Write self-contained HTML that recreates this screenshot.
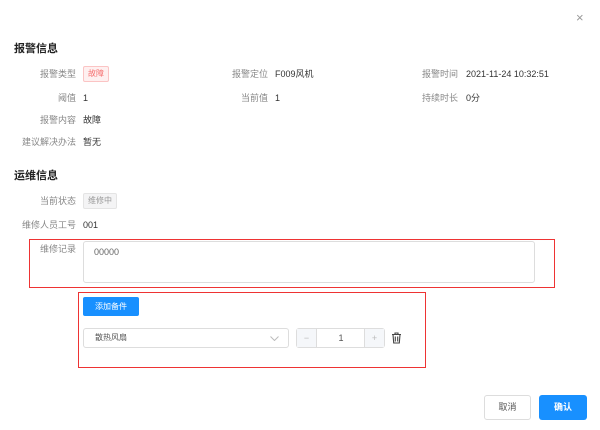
<!DOCTYPE html><html><head><meta charset="utf-8"><style>
body{margin:0;width:600px;height:430px;background:#fff;font-family:"Liberation Sans","Noto Sans CJK SC",sans-serif;font-size:9px;color:#333;position:relative;overflow:hidden}
.a{position:absolute;white-space:nowrap;line-height:12px}
.l{color:#888;text-align:right;width:70px}
h{position:absolute;font-weight:bold;font-size:11px;color:#222}
</style></head><body>
<div class="a" style="left:576px;top:12px;font-size:13px;color:#999">×</div>
<h style="left:14px;top:40px">报警信息</h>
<div class="a l" style="left:6px;top:68px">报警类型</div>
<div class="a" style="left:83px;top:66px;border:1px solid #fbc4c4;background:#fef0f0;color:#f56c6c;font-size:8px;padding:1px 4px;border-radius:2px">故障</div>
<div class="a l" style="left:198px;top:68px">报警定位</div><div class="a" style="left:275px;top:68px">F009风机</div>
<div class="a l" style="left:388px;top:68px">报警时间</div><div class="a" style="left:466px;top:68px">2021-11-24 10:32:51</div>
<div class="a l" style="left:6px;top:92px">阈值</div><div class="a" style="left:83px;top:92px">1</div>
<div class="a l" style="left:198px;top:92px">当前值</div><div class="a" style="left:275px;top:92px">1</div>
<div class="a l" style="left:388px;top:92px">持续时长</div><div class="a" style="left:466px;top:92px">0分</div>
<div class="a l" style="left:6px;top:114px">报警内容</div><div class="a" style="left:83px;top:114px">故障</div>
<div class="a l" style="left:6px;top:136px">建议解决办法</div><div class="a" style="left:83px;top:136px">暂无</div>
<h style="left:14px;top:167px">运维信息</h>
<div class="a l" style="left:6px;top:195px">当前状态</div>
<div class="a" style="left:83px;top:193px;border:1px solid #e4e4e4;background:#f4f4f5;color:#999;font-size:8px;padding:1px 4px;border-radius:2px">维修中</div>
<div class="a l" style="left:6px;top:219px">维修人员工号</div><div class="a" style="left:83px;top:219px">001</div>
<div class="a" style="left:29px;top:239px;width:524px;height:47px;border:1px solid #e33"></div>
<div class="a l" style="left:6px;top:243px">维修记录</div>
<div class="a" style="left:83px;top:241px;width:452px;height:42px;border:1px solid #ddd;border-radius:3px;color:#666;padding:4px 10px;box-sizing:border-box;font-size:9px">00000</div>
<div class="a" style="left:78px;top:292px;width:346px;height:74px;border:1px solid #e33"></div>
<div class="a" style="left:83px;top:297px;width:56px;height:19px;background:#1890ff;border-radius:2px;color:#fff;font-size:8px;line-height:19px;text-align:center">添加备件</div>
<div class="a" style="left:83px;top:328px;width:206px;height:20px;border:1px solid #ddd;border-radius:3px;box-sizing:border-box;color:#555;font-size:8px;line-height:18px;padding-left:11px">散热风扇<svg style="position:absolute;right:9px;top:7px" width="9" height="5" viewBox="0 0 9 5"><path d="M.5 .5L4.5 4.5 8.5 .5" stroke="#bbb" fill="none"/></svg></div>
<div class="a" style="left:296px;top:328px;width:89px;height:20px;border:1px solid #ddd;border-radius:3px;box-sizing:border-box">
<div class="a" style="left:0;top:0;width:19px;height:18px;background:#f5f7fa;border-right:1px solid #ddd;color:#bbb;text-align:center;line-height:18px">−</div>
<div class="a" style="left:20px;top:0;width:48px;text-align:center;line-height:18px;color:#555">1</div>
<div class="a" style="right:0;top:0;width:19px;height:18px;background:#f5f7fa;border-left:1px solid #ddd;color:#bbb;text-align:center;line-height:18px">+</div></div>
<svg class="a" style="left:391px;top:332px" width="11" height="12" viewBox="0 0 11 12"><path d="M1 2.5h9M4 2.5V1h3v1.5M2 2.5l.7 8.5h5.6L9 2.5M4.3 4.5v5M6.7 4.5v5" stroke="#444" stroke-width="1.1" fill="none"/></svg>
<div class="a" style="left:484px;top:395px;width:47px;height:25px;border:1px solid #ddd;border-radius:3px;box-sizing:border-box;text-align:center;line-height:23px;color:#555">取消</div>
<div class="a" style="left:539px;top:395px;width:48px;height:25px;background:#1890ff;border-radius:3px;text-align:center;line-height:25px;color:#fff;font-weight:bold">确认</div>
</body></html>
